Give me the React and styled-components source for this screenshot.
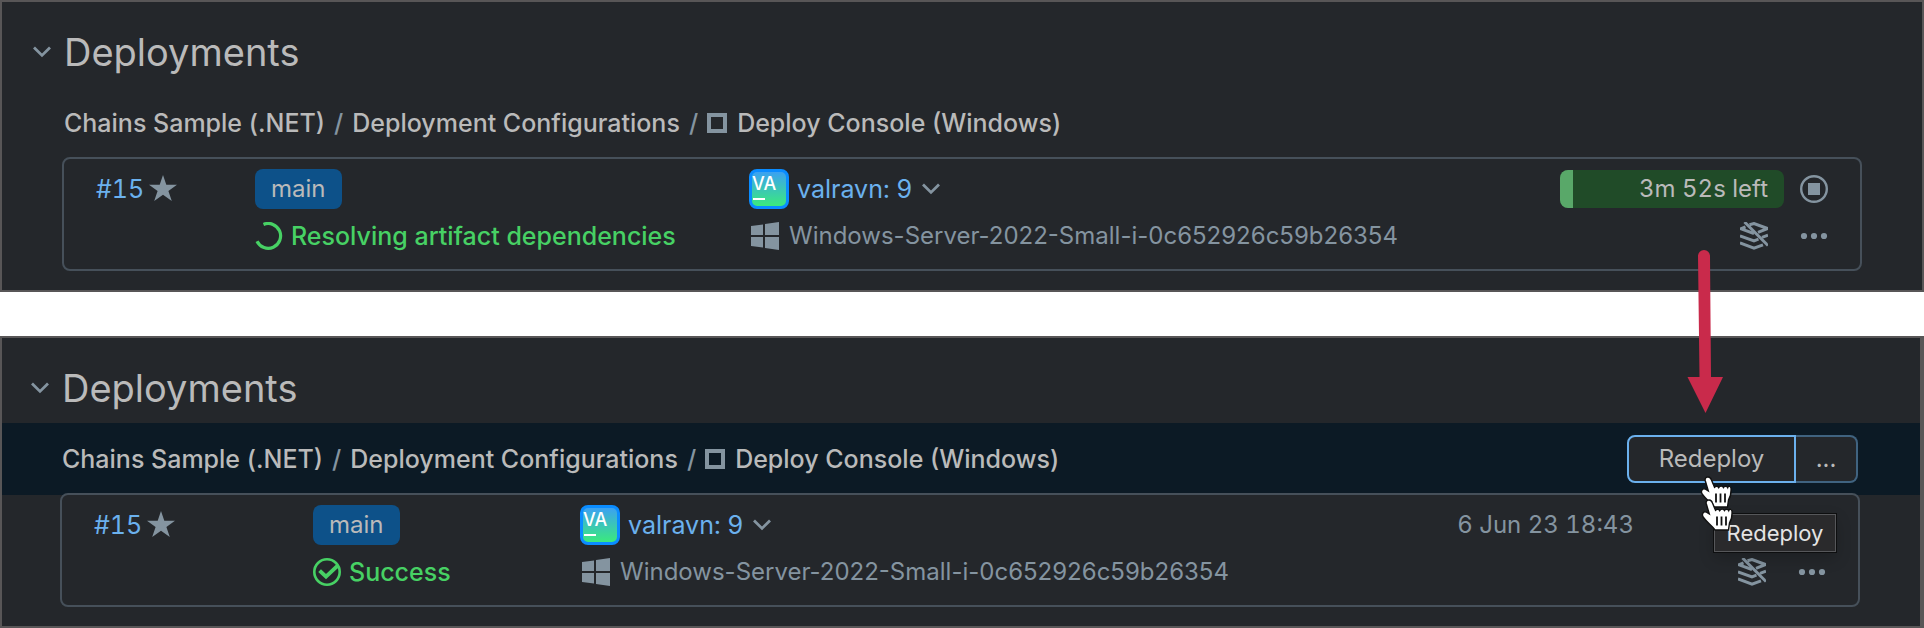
import React from "react";
import styled, { createGlobalStyle } from "styled-components";

const GlobalStyle = createGlobalStyle`
  * { box-sizing: border-box; }
  body {
    margin: 0;
    background: #ffffff;
    font-family: Inter, "Liberation Sans", sans-serif;
    color: #bababa;
  }
  a { color: inherit; text-decoration: none; }
  svg { display: block; flex: none; }
`;

const Page = styled.main`
  position: relative;
  display: flex;
  flex-direction: column;
  gap: 44px;
`;

const Panel = styled.section`
  background: #24272b;
  border: 2px solid #585657;
  border-right-width: ${(p) => (p.$hovered ? 4 : 2)}px;
  padding: 20px 0 19px;
`;

const Heading = styled.header`
  display: flex;
  align-items: center;
  gap: 12px;
  height: 65px;
  padding: 0 0 6px ${(p) => (p.$hovered ? 28 : 30)}px;
`;

const Title = styled.h2`
  margin: 0;
  font-size: 38px;
  font-weight: 400;
  line-height: 60px;
`;

const IconButton = styled.button`
  display: flex;
  padding: 0;
  border: 0;
  background: none;
  color: #8494a0;
  cursor: pointer;
`;

const PathBar = styled.div`
  display: flex;
  align-items: center;
  justify-content: space-between;
  height: 72px;
  padding: 0 62px 0 ${(p) => (p.$hovered ? 60 : 62)}px;
  background: ${(p) => (p.$hovered ? "#0c1a25" : "transparent")};
`;

const Crumbs = styled.nav`
  display: flex;
  align-items: center;
  gap: 9px;
  font-size: 25px;
  font-weight: 500;
  line-height: 32px;
  white-space: nowrap;
`;

const Separator = styled.span`
  color: #8494a0;
`;

const ConfigLink = styled.a`
  display: flex;
  align-items: center;
  gap: 10px;
`;

const SquareIcon = styled.span`
  width: 20px;
  height: 20px;
  border: 4px solid #8494a0;
`;

const SplitButton = styled.div`
  display: flex;
`;

const ActionButton = styled.button`
  height: 48px;
  padding: 0;
  width: ${(p) => (p.$more ? 62 : 169)}px;
  border: 2px solid ${(p) => (p.$more ? "#406380" : "#6bb1ee")};
  border-left-width: ${(p) => (p.$more ? 0 : 2)}px;
  border-radius: ${(p) => (p.$more ? "0 8px 8px 0" : "8px 0 0 8px")};
  background: #24272b;
  color: #bababa;
  font: 400 24px/32px Inter, "Liberation Sans", sans-serif;
  cursor: pointer;
`;

const Card = styled.article`
  display: grid;
  grid-template-columns: ${(p) => (p.$hovered ? "219px 267px" : "159px 494px")} minmax(0, 1fr) auto;
  height: 114px;
  margin: -2px 60px 0 ${(p) => (p.$hovered ? 58 : 60)}px;
  padding: 9px 32px 0;
  border: 2px solid #46505a;
  border-radius: 8px;
  background: #24272b;
  font-size: 24px;
  line-height: 32px;
`;

const Column = styled.div`
  display: flex;
  flex-direction: column;
  align-items: ${(p) => (p.$end ? "flex-end" : "flex-start")};
  gap: 10px;
  white-space: nowrap;
`;

const Line = styled.div`
  display: flex;
  align-items: center;
  gap: ${(p) => p.$gap || 8}px;
  height: ${(p) => (p.$second ? 32 : 42)}px;
  padding-left: ${(p) => p.$inset || 0}px;
  color: #8494a0;
  font-variant-numeric: ${(p) => (p.$second ? "normal" : "tabular-nums")};
`;

const Status = styled(Line)`
  color: #47d164;
  font-size: 25px;
  font-weight: 500;
`;

const BuildLink = styled.a`
  color: #6bb1ee;
  font-size: 25px;
`;

const Branch = styled.a`
  height: 40px;
  padding: 0 16px;
  border-radius: 8px;
  background: #0d5189;
  color: #bababa;
  line-height: 40px;
`;

const Avatar = styled.span`
  display: flex;
  flex-direction: column;
  gap: 6px;
  width: 40px;
  height: 40px;
  padding: 4px 0 0;
  border: 3px solid #0a8cff;
  border-radius: 8px;
  background: linear-gradient(#3ba1f2, #3bea7c);
  color: #ffffff;
  font-size: 18px;
  font-weight: 500;
  line-height: 16px;

  &::after {
    content: "";
    width: 12px;
    height: 2px;
    margin-left: 1px;
    background: #ffffff;
  }
`;

const Progress = styled.div`
  display: flex;
  width: 224px;
  height: 38px;
  border-radius: 8px;
  overflow: hidden;
  background: #204b28;
  color: #bababa;
  line-height: 38px;
`;

const ProgressFill = styled.span`
  width: 6%;
  background: #59a869;
`;

const ProgressLabel = styled.span`
  flex: 1;
  padding-right: 16px;
  text-align: right;
`;

const When = styled.time`
  padding-right: 192px;
`;

const Tooltip = styled.div`
  position: absolute;
  top: 514px;
  right: 88px;
  width: 122px;
  height: 38px;
  border: 1px solid #56575a;
  outline: 1px solid #0d0e0f;
  background: #2a2a2c;
  color: #e4e4e4;
  font-size: 22px;
  line-height: 36px;
  text-align: center;
  box-shadow: 0 6px 16px rgba(0, 0, 0, 0.2);
`;

const Arrow = styled.svg`
  position: absolute;
  top: 248px;
  right: 200px;
`;

const Pointer = styled.svg`
  position: absolute;
  top: ${(p) => p.$top}px;
  right: ${(p) => p.$right}px;
`;

function Chevron({ label }) {
  return (
    <IconButton aria-label={label}>
      <svg width="20" height="14" viewBox="0 0 20 14" fill="none">
        <path d="M2 2.600 10 10.400l8-7.800" stroke="currentColor" strokeWidth="2.800" />
      </svg>
    </IconButton>
  );
}

function StarIcon() {
  return (
    <svg width="28" height="28" viewBox="0 0 28 28" fill="#8494a0">
      <path d="M14 0 17.300 9.800 28 9.800 19.400 15.900 22.800 26 14 19.800 5.200 26 8.600 15.900 0 9.800 10.700 9.800z" />
    </svg>
  );
}

function SpinnerIcon() {
  return (
    <svg width="28" height="28" viewBox="0 0 28 28" fill="none">
      <path d="M8.500 2.400A12.400 12.400 0 1 1 2 19.200" stroke="#47d164" strokeWidth="3.200" />
    </svg>
  );
}

function SuccessIcon() {
  return (
    <svg width="28" height="28" viewBox="0 0 28 28" fill="none" stroke="#47d164">
      <circle cx="14" cy="14" r="12.700" strokeWidth="2.600" />
      <path d="M6.600 12.600 13 18.600 25 7.400" strokeWidth="4" />
    </svg>
  );
}

function WindowsIcon() {
  return (
    <svg width="28" height="28" viewBox="0 0 28 28" fill="#8494a0">
      <path d="M0 4 12 2.400V13H0zM14 2.100 28 0V13H14zM0 15H12V25.600L0 24zM14 15H28V28L14 25.900z" />
    </svg>
  );
}

function StopIcon() {
  return (
    <svg width="28" height="28" viewBox="0 0 28 28">
      <circle cx="14" cy="14" r="12.800" fill="none" stroke="currentColor" strokeWidth="2.400" />
      <path d="M8 8h12v12H8z" fill="currentColor" />
    </svg>
  );
}

function StackOffIcon() {
  return (
    <svg width="28" height="28" viewBox="0 0 28 28" fill="none" stroke="currentColor" strokeWidth="3">
      <path d="M9.500 2.800 14 1.500 27.500 6.500 18 10.300" />
      <path d="M5.500 4.800 1 6.800 14 11.500" />
      <path d="M0 13.800 14 18.800 18.500 17.200M22 15.400 28 13.200" />
      <path d="M0 20.800 14 26.200 23 22.800" />
      <path d="M4.500 0 28 23.500" />
    </svg>
  );
}

function DotsIcon() {
  return (
    <svg width="28" height="28" viewBox="0 0 28 28" fill="currentColor">
      <circle cx="4" cy="14" r="3.100" />
      <circle cx="14" cy="14" r="3.100" />
      <circle cx="24" cy="14" r="3.100" />
    </svg>
  );
}

function Hand({ top, right }) {
  return (
    <Pointer $top={top} $right={right} width="34" height="34" viewBox="0 0 34 34" aria-hidden="true">
      <path
        d="M8.500 1C10.500 .6 11.800 1.800 12.500 4L15.500 11.300C16.800 9.800 19 10 19.700 11.600 21 9.600 23.600 9.800 24.400 11.500 25.500 9.700 28 9.900 28.700 11.500 29.200 9.700 31.600 10 32 12 32.300 17 31.500 21 29.500 24L28.500 31H15C12 26.500 7 23.500 3.500 18.500 1 15 3.500 11.800 6.500 13.200L9.300 15 6.200 4.500C5.800 2.500 6.800 1.300 8.500 1z"
        fill="#fff"
        stroke="#111"
        strokeWidth="1.400"
      />
      <path d="M17 17.500v9M21.500 17.500v9M26 17.500v9" stroke="#111" strokeWidth="1.800" />
    </Pointer>
  );
}

function Deployment({ hovered, status, children }) {
  return (
    <Panel $hovered={hovered}>
      <Heading $hovered={hovered}>
        <Chevron label="Collapse deployments" />
        <Title>Deployments</Title>
      </Heading>
      <PathBar $hovered={hovered}>
        <Crumbs aria-label="Project path">
          <a href="#project">Chains Sample (.NET)</a>
          <Separator>/</Separator>
          <a href="#configurations">Deployment Configurations</a>
          <Separator>/</Separator>
          <ConfigLink href="#console">
            <SquareIcon />
            Deploy Console (Windows)
          </ConfigLink>
        </Crumbs>
        {hovered && (
          <SplitButton>
            <ActionButton>Redeploy</ActionButton>
            <ActionButton $more aria-label="More deploy options">...</ActionButton>
          </SplitButton>
        )}
      </PathBar>
      <Card $hovered={hovered}>
        <Column>
          <Line $gap={5}>
            <BuildLink href="#build">#15</BuildLink>
            <StarIcon />
          </Line>
        </Column>
        <Column>
          <Line>
            <Branch href="#branch">main</Branch>
          </Line>
          <Status $second>
            {hovered ? <SuccessIcon /> : <SpinnerIcon />}
            {status}
          </Status>
        </Column>
        <Column>
          <Line>
            <Avatar>VA</Avatar>
            <BuildLink href="#changes">valravn: 9</BuildLink>
            <Chevron label="Show changes" />
          </Line>
          <Line $second $gap={10} $inset={2}>
            <WindowsIcon />
            Windows-Server-2022-Small-i-0c652926c59b26354
          </Line>
        </Column>
        <Column $end>{children}</Column>
      </Card>
    </Panel>
  );
}

function Tools() {
  return (
    <Line $second $gap={32}>
      <IconButton aria-label="Artifacts unavailable"><StackOffIcon /></IconButton>
      <IconButton aria-label="More actions"><DotsIcon /></IconButton>
    </Line>
  );
}

export default function App() {
  return (
    <>
      <GlobalStyle />
      <Page>
        <Deployment status="Resolving artifact dependencies">
          <Line $gap={16}>
            <Progress>
              <ProgressFill />
              <ProgressLabel>3m 52s left</ProgressLabel>
            </Progress>
            <IconButton aria-label="Stop"><StopIcon /></IconButton>
          </Line>
          <Tools />
        </Deployment>
        <Deployment hovered status="Success">
          <Line>
            <When>6 Jun 23 18:43</When>
          </Line>
          <Tools />
        </Deployment>
        <Tooltip role="tooltip">Redeploy</Tooltip>
        <Arrow width="38" height="166" viewBox="0 0 38 166" fill="#c92a4b" aria-hidden="true">
          <path d="M12 8a6 6 0 0 1 12 0L25 129H37L19.500 165 1.500 129H13.500z" />
        </Arrow>
        <Hand top={476} right={191} />
        <Hand top={499} right={190} />
      </Page>
    </>
  );
}
